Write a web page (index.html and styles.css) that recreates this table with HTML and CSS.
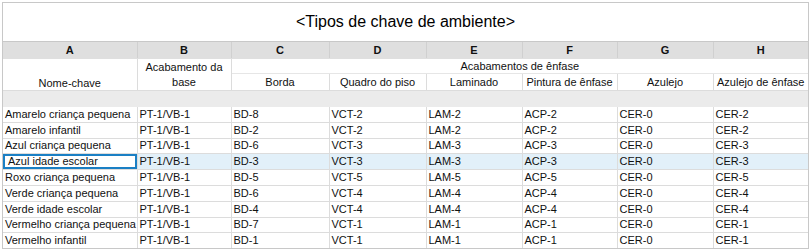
FILE: index.html
```html
<!DOCTYPE html>
<html lang="pt">
<head>
<meta charset="utf-8">
<link rel="stylesheet" href="styles.css">
</head>
<body>
<div class="sheet">
  <div class="title">&lt;Tipos de chave de ambiente&gt;</div>
  <table class="grid">
    <colgroup>
      <col class="c-a"><col class="c-b"><col class="c-c"><col class="c-d"><col class="c-e"><col class="c-f"><col class="c-g"><col class="c-h">
    </colgroup>
    <thead>
      <tr class="letters">
        <th>A</th><th>B</th><th>C</th><th>D</th><th>E</th><th>F</th><th>G</th><th>H</th>
      </tr>
      <tr class="group">
        <th rowspan="2" class="bottom">Nome-chave</th>
        <th rowspan="2" class="wrap">Acabamento da base</th>
        <th colspan="6">Acabamentos de ênfase</th>
      </tr>
      <tr class="sub">
        <th>Borda</th><th>Quadro do piso</th><th>Laminado</th><th>Pintura de ênfase</th><th>Azulejo</th><th>Azulejo de ênfase</th>
      </tr>
      <tr class="band"><td colspan="8"></td></tr>
    </thead>
    <tbody>
      <tr><td>Amarelo criança pequena</td><td>PT-1/VB-1</td><td>BD-8</td><td>VCT-2</td><td>LAM-2</td><td>ACP-2</td><td>CER-0</td><td>CER-2</td></tr>
      <tr><td>Amarelo infantil</td><td>PT-1/VB-1</td><td>BD-2</td><td>VCT-2</td><td>LAM-2</td><td>ACP-2</td><td>CER-0</td><td>CER-2</td></tr>
      <tr><td>Azul criança pequena</td><td>PT-1/VB-1</td><td>BD-6</td><td>VCT-3</td><td>LAM-3</td><td>ACP-3</td><td>CER-0</td><td>CER-3</td></tr>
      <tr class="selected"><td class="active">Azul idade escolar</td><td>PT-1/VB-1</td><td>BD-3</td><td>VCT-3</td><td>LAM-3</td><td>ACP-3</td><td>CER-0</td><td>CER-3</td></tr>
      <tr><td>Roxo criança pequena</td><td>PT-1/VB-1</td><td>BD-5</td><td>VCT-5</td><td>LAM-5</td><td>ACP-5</td><td>CER-0</td><td>CER-5</td></tr>
      <tr><td>Verde criança pequena</td><td>PT-1/VB-1</td><td>BD-6</td><td>VCT-4</td><td>LAM-4</td><td>ACP-4</td><td>CER-0</td><td>CER-4</td></tr>
      <tr><td>Verde idade escolar</td><td>PT-1/VB-1</td><td>BD-4</td><td>VCT-4</td><td>LAM-4</td><td>ACP-4</td><td>CER-0</td><td>CER-4</td></tr>
      <tr><td>Vermelho criança pequena</td><td>PT-1/VB-1</td><td>BD-7</td><td>VCT-1</td><td>LAM-1</td><td>ACP-1</td><td>CER-0</td><td>CER-1</td></tr>
      <tr><td>Vermelho infantil</td><td>PT-1/VB-1</td><td>BD-1</td><td>VCT-1</td><td>LAM-1</td><td>ACP-1</td><td>CER-0</td><td>CER-1</td></tr>
    </tbody>
  </table>
</div>
</body>
</html>
```
FILE: styles.css
```css
html, body {
  margin: 0;
  padding: 0;
  background: #ffffff;
}
body {
  font-family: "Liberation Sans", Arial, sans-serif;
  font-size: 11px;
  color: #000;
}
.sheet {
  margin: 2px 0 0 2px;
  width: 805px;
  border: 1px solid #c8c8c8;
  border-bottom: 1px solid #c8c8c8;
}
.title {
  height: 38px;
  line-height: 38px;
  text-align: center;
  font-size: 16px;
  color: #000;
  border-bottom: 1px solid #c8c8c8;
}
.grid {
  width: 805px;
  table-layout: fixed;
  border-collapse: collapse;
  border-style: hidden;
}
.c-a { width: 134px; }
.c-b { width: 94px; }
.c-c { width: 98px; }
.c-d { width: 97px; }
.c-e { width: 96px; }
.c-f { width: 95px; }
.c-g { width: 96px; }
.c-h { width: 95px; }
.grid th, .grid td {
  border: 1px solid #dcdcdc;
  padding: 0 2px;
  white-space: nowrap;
  overflow: hidden;
  font-weight: normal;
  color: #111;
}
.letters th {
  height: 16px;
  background: #dfdfdf;
  font-weight: bold;
  text-align: center;
  border-color: #d0d0d0;
  border-bottom-color: #dfdfdf;
}
.group th {
  height: 14px;
  text-align: center;
  vertical-align: middle;
}
.group th[colspan] {
  border-bottom-color: #e6e6e6;
}
.group th.bottom {
  vertical-align: bottom;
  padding-bottom: 1px;
}
.group th.wrap {
  white-space: normal;
  line-height: 15px;
}
.sub th {
  height: 16px;
  text-align: center;
}
.band td {
  height: 15px;
  background: #ebebeb;
  border-color: #ebebeb;
  padding: 0;
}
tbody td {
  height: 14.8px;
  line-height: 13px;
  text-align: left;
  padding: 0 2px;
}
tbody tr.selected td {
  background: #e2f0f9;
}
tbody tr.selected td.active {
  background: #ffffff;
  box-shadow: inset 0 0 0 2px #1a7fc4;
  padding-left: 5px;
}
```
